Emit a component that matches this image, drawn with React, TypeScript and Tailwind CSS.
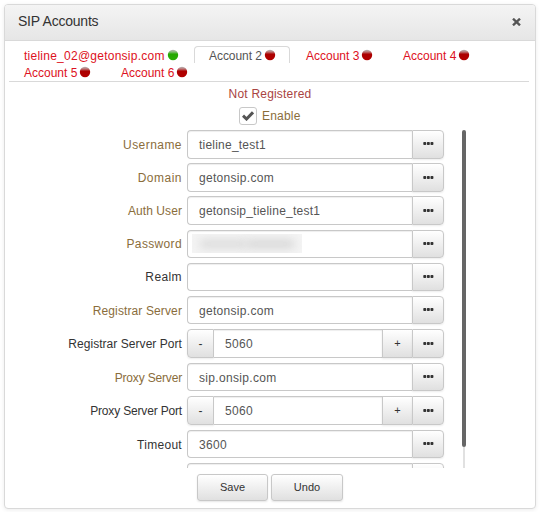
import clsx from "clsx";

type Tab = {
  name: string;
  online?: boolean;
  active?: boolean;
  className: string;
};

type Field = {
  label: string;
  value?: string;
  kind?: "text" | "port" | "password";
  optional?: boolean;
  row: string;
  box: string;
  labelClass?: string;
  valueClass?: string;
  moreClass?: string;
};

const tabs: Tab[] = [
  { name: "tieline_02@getonsip.com", online: true, className: "w-[185px] pl-[15px] tracking-[0.25px]" },
  { name: "Account 2", active: true, className: "mr-px w-[96px] pl-[14px] tracking-[-0.05px]" },
  { name: "Account 3", className: "w-[97px] pl-[15px]" },
  { name: "Account 4", className: "w-[97px] pl-[15px]" },
  { name: "Account 5", className: "w-[97px] pl-[15px]" },
  { name: "Account 6", className: "w-[97px] pl-[15px]" },
];

const fields: Field[] = [
  { label: "Username", value: "tieline_test1", row: "h-[33px]", box: "h-[29px]", labelClass: "leading-[30px] tracking-[0.45px]", valueClass: "tracking-[0.22px]" },
  { label: "Domain", value: "getonsip.com", row: "h-[33px]", box: "h-[29px]", labelClass: "leading-[30px] tracking-[0.5px]", valueClass: "tracking-[0.3px]", moreClass: "pt-3" },
  { label: "Auth User", value: "getonsip_tieline_test1", row: "h-[34px]", box: "h-[29px]", labelClass: "leading-[30px] tracking-[0.08px]", valueClass: "tracking-[0.23px]", moreClass: "pt-3" },
  { label: "Password", kind: "password", row: "h-[33px]", box: "h-[28px]", labelClass: "leading-[28px] tracking-[0.35px]" },
  { label: "Realm", optional: true, row: "h-[33px]", box: "h-[28px]", labelClass: "leading-[28px] tracking-[0.4px]" },
  { label: "Registrar Server", value: "getonsip.com", row: "h-[33px]", box: "h-[28px]", labelClass: "leading-[30px] tracking-[0.12px]", valueClass: "tracking-[0.3px]" },
  { label: "Registrar Server Port", value: "5060", kind: "port", optional: true, row: "h-[34px]", box: "h-[29px]", labelClass: "leading-[30px] tracking-[0.05px]", valueClass: "tracking-[0.3px]", moreClass: "pt-3" },
  { label: "Proxy Server", value: "sip.onsip.com", row: "h-[33px]", box: "h-[28px]", labelClass: "leading-[30px] tracking-[-0.17px]", valueClass: "tracking-[0.33px]" },
  { label: "Proxy Server Port", value: "5060", kind: "port", optional: true, row: "h-[34px]", box: "h-[29px]", labelClass: "leading-[30px] tracking-[-0.17px]", valueClass: "tracking-[0.3px]", moreClass: "pt-3" },
  { label: "Timeout", value: "3600", optional: true, row: "h-[33px]", box: "h-[28px]", labelClass: "leading-[30px] tracking-[0.3px]", valueClass: "tracking-[0.3px]" },
  { label: "", row: "h-[33px]", box: "h-[28px]" },
];

function StatusDot({ online }: { online?: boolean }) {
  return (
    <svg width="12" height="12" viewBox="0 0 12 12" className="shrink-0">
      <defs>
        <linearGradient id={online ? "dot-on" : "dot-off"} x1="0" y1="0" x2="0" y2="1">
          <stop offset="0" stopColor="#b5b5b5" />
          <stop offset="0.2" stopColor={online ? "#86bd79" : "#bd7979"} />
          <stop offset="0.42" stopColor={online ? "#24a800" : "#ac0000"} />
          <stop offset="1" stopColor={online ? "#2bad08" : "#b30000"} />
        </linearGradient>
      </defs>
      <circle cx="6" cy="6" r="5.2" fill={online ? "url(#dot-on)" : "url(#dot-off)"} />
    </svg>
  );
}

function MoreButton({ className = "pt-[11px]" }: { className?: string }) {
  return (
    <button
      className={clsx(
        "flex w-8 shrink-0 items-start justify-center rounded-r border border-[#c8c8c8] bg-linear-to-b from-white to-[#e0e0e0] pl-px shadow-[0_1px_2px_rgba(0,0,0,0.08)]",
        className,
      )}
    >
      <svg width="11" height="3" viewBox="0 0 11 3" fill="#333">
        <rect x="0.3" width="2.9" height="3" rx="0.8" />
        <rect x="3.9" width="2.9" height="3" rx="0.8" />
        <rect x="7.5" width="2.9" height="3" rx="0.8" />
      </svg>
    </button>
  );
}

function FieldRow({ field }: { field: Field }) {
  const isPort = field.kind === "port";

  return (
    <div className={clsx("flex shrink-0 items-start", field.row)}>
      <label
        className={clsx(
          "w-[178px] shrink-0 pr-[5px] text-right whitespace-nowrap",
          field.optional ? "text-[#333]" : "text-[#8a6d3b]",
          field.labelClass,
        )}
      >
        {field.label}
      </label>
      <div className={clsx("flex w-[257px]", field.box)}>
        {isPort && (
          <button className="w-[27px] shrink-0 rounded-l border border-[#c8c8c8] bg-linear-to-b from-white to-[#e0e0e0] text-[#333] shadow-[0_1px_2px_rgba(0,0,0,0.08)]">
            -
          </button>
        )}
        <div
          className={clsx(
            "min-w-0 flex-1 border-y border-[#c8c8c8] bg-white pl-[11px] leading-[28px] text-[#555] shadow-[inset_0_1px_1px_rgba(0,0,0,0.07)]",
            !isPort && "rounded-l border-l",
            field.valueClass,
          )}
        >
          {field.kind === "password" ? (
            <div className="mt-[3px] -ml-[7px] flex h-[19px] w-[110px] items-center justify-center overflow-hidden bg-[#f4f4f4]">
              <div className="h-2 w-[47px] bg-[#d8d8d8] blur-[5px]" />
              <div className="h-2 w-[47px] bg-[#d3d3d3] blur-[5px]" />
            </div>
          ) : (
            field.value
          )}
        </div>
        {isPort && (
          <button className="w-[30px] shrink-0 border border-r-0 border-[#c8c8c8] bg-linear-to-b from-white to-[#e0e0e0] text-[11px] text-[#333] shadow-[0_1px_2px_rgba(0,0,0,0.08)]">
            +
          </button>
        )}
        <MoreButton className={field.moreClass} />
      </div>
    </div>
  );
}

export default function App() {
  return (
    <div className="h-[512px] w-[542px] bg-white pt-1 pl-1 font-['Liberation_Sans',Arial,sans-serif] text-[12px]">
      <div className="flex h-[505px] w-[532px] flex-col rounded border border-[#d9d9d9] bg-white shadow-[0_1px_4px_rgba(0,0,0,0.08)]">
        {/* Title bar */}
        <header className="flex h-9 shrink-0 items-center justify-between rounded-t-[3px] border-b border-[#d9d9d9] bg-linear-to-b from-[#f4f4f4] to-[#e6e6e6] pr-[14px] pl-[13px]">
          <h1 className="pb-[3px] text-[14px] leading-none tracking-[-0.22px] text-[#333]">SIP Accounts</h1>
          <button aria-label="Close" className="pb-px">
            <svg width="9" height="8" viewBox="0 0 9 8" stroke="#555" strokeWidth="2.4">
              <path d="M1 0.7 8 7.3M8 0.7 1 7.3" />
            </svg>
          </button>
        </header>

        {/* Account tabs */}
        <nav className="mr-1.5 ml-1 flex h-[41px] shrink-0 flex-wrap content-start border-b border-[#d9d9d9] pt-[5px]">
          {tabs.map((tab) => (
            <a
              key={tab.name}
              className={clsx(
                "flex h-[17px] items-center whitespace-nowrap",
                tab.className,
                tab.active
                  ? "rounded-t border border-b-0 border-[#d9d9d9] text-[#555]"
                  : "text-[#dd1122]",
              )}
            >
              <span className="mr-0.5 pt-[2px]">{tab.name}</span>
              <StatusDot online={tab.online} />
            </a>
          ))}
        </nav>

        <p className="mt-[5px] text-center leading-[14px] tracking-[0.2px] text-[#a94442]">Not Registered</p>
        <label className="mt-[6px] flex h-[18px] shrink-0 items-center pl-[234px] text-[#8a6d3b]">
          <span className="flex size-[18px] items-center justify-center rounded-[3px] border border-[#c8c8c8] bg-white">
            <svg width="12" height="10" viewBox="0 0 12 10" fill="none" stroke="#555" strokeWidth="3">
              <path d="M1 4.7 4.5 8 11 1.3" />
            </svg>
          </span>
          <span className="ml-[5px] tracking-[0.2px]">Enable</span>
        </label>

        <div className="mt-[5px] flex h-[338px] shrink-0 overflow-hidden">
          <div className="flex w-[457px] shrink-0 flex-col pl-1">
            {fields.map((field) => (
              <FieldRow key={field.label} field={field} />
            ))}
          </div>
          <div className="flex w-1 flex-col items-center">
            <div className="h-[317px] w-1 shrink-0 rounded-sm bg-[#666]" />
            <div className="w-0.5 flex-1 bg-[#e1e1e1]" />
          </div>
        </div>

        <footer className="mt-[6px] flex gap-[3px] pl-[192px] text-[11px] text-[#333]">
          <button className="h-[27px] w-[71px] rounded-[3px] border border-[#c8c8c8] bg-linear-to-b from-white to-[#e0e0e0] shadow-[0_1px_2px_rgba(0,0,0,0.1)]">
            Save
          </button>
          <button className="h-[27px] w-[72px] rounded-[3px] border border-[#c8c8c8] bg-linear-to-b from-white to-[#e0e0e0] shadow-[0_1px_2px_rgba(0,0,0,0.1)]">
            Undo
          </button>
        </footer>
      </div>
    </div>
  );
}
